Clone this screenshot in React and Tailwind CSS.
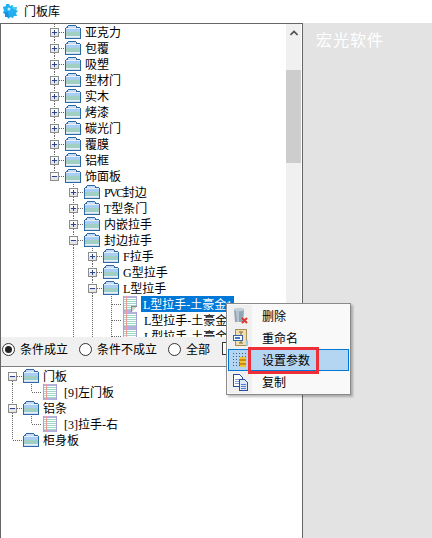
import React from "react";

const Cell = ({ up, down, right, box }) => (
  <svg width="19" height="16" className="shrink-0 block" shapeRendering="crispEdges">
    {up && <line x1="9.5" y1={0} x2="9.5" y2={box ? 4 : 8} stroke="#666" strokeDasharray="1 1" />}
    {down && <line x1="9.5" y1={box ? 13 : 8} x2="9.5" y2="16" stroke="#666" strokeDasharray="1 1" />}
    {right && <line x1={box ? 14 : 10} y1="8.5" x2="19" y2="8.5" stroke="#666" strokeDasharray="1 1" />}
    {box && (
      <g>
        <rect x="5.5" y="4.5" width="8" height="8" fill="#e6e6e6" stroke="#8c8c8c" />
        <rect x="6" y="5" width="7" height="3" fill="#fbfbfb" />
        <line x1="7" y1="8.5" x2="12" y2="8.5" stroke="#2a4490" />
        {box === "+" && <line x1="9.5" y1="6" x2="9.5" y2="11" stroke="#2a4490" />}
      </g>
    )}
  </svg>
);

const Folder = () => (
  <svg width="16" height="14" viewBox="0 0 16 14" className="shrink-0 block ml-px mr-[4px]" shapeRendering="crispEdges">
    <rect x="1" y="3" width="14" height="10" fill="#e4eef8" />
    <rect x="1" y="4" width="14" height="3" fill="#a9cdf3" />
    <rect x="1" y="7" width="14" height="4" fill="#a0cfc4" />
    <rect x="3" y="1" width="8" height="2" fill="#c9def5" />
    <path d="M2.5 2.5v-1l1-1h7l1 1v1h3l1 1v9H.5v-9l1-1z" fill="none" stroke="#2a68a6" />
    <rect x="0" y="12" width="16" height="2" fill="#2a68a6" />
    <rect x="1" y="12" width="14" height="1" fill="#cfe0f0" />
  </svg>
);

const Note = ({ ear }) => (
  <svg width="14" height="16" viewBox="0 0 14 16" className="shrink-0 block ml-[2px] mr-[4px]" shapeRendering="crispEdges">
    <rect x="0" y="0" width="14" height="16" fill="#fff" />
    <rect x="0" y="0" width="14" height="2" fill="#b4b0e0" />
    <rect x="0" y="14" width="14" height="2" fill="#b4b0e0" />
    <rect x="0" y="0" width="1" height="16" fill="#a7a3d8" />
    <rect x="13" y="0" width="1" height="16" fill="#a7a3d8" />
    {[3, 5, 7, 9, 11, 13].map((y) => (
      <rect key={y} x="1" width="12" y={y} height="1" fill="#9ad8c8" />
    ))}
    <rect x="3" y="0" width="1" height="16" fill="#f59a9a" />
    {ear && <path d="M8 16v-6h6v6z" fill="#fff" />}
    {ear && <path d="M9 15v-4h4z" fill="#cfcfcf" />}
    {ear && <path d="M8.5 15.5v-5h5" fill="none" stroke="#8a8a8a" />}
  </svg>
);

const Dir = ({ pre = [], up, down, box, children }) => (
  <div className="flex h-4 items-start whitespace-nowrap">
    {pre.map((g, i) => (
      <Cell key={i} up={g} down={g} />
    ))}
    <Cell up={up} down={down} right box={box} />
    <div className="h-4 flex items-center">
      <Folder />
    </div>
    <span className="leading-4 pt-px">{children}</span>
  </div>
);

const Leaf = ({ pre = [], down = true, selected, ear, children }) => (
  <div className="flex h-4 items-start whitespace-nowrap">
    {pre.map((g, i) => (
      <Cell key={i} up={g} down={g} />
    ))}
    <Cell up down={down} right />
    <Note ear={ear} />
    <span className={selected ? "h-4 leading-4 pt-px pl-[2px] pr-[2px] bg-[#0078d7] text-white" : "leading-4 pt-px pl-[3px]"}>{children}</span>
  </div>
);

const Radio = ({ on, children, className = "" }) => (
  <div className={"flex items-center gap-[5px] " + className}>
    <span className="w-[13px] h-[13px] rounded-full border border-[#333] bg-white flex items-center justify-center">
      {on && <span className="w-[7px] h-[7px] rounded-full bg-[#222]" />}
    </span>
    <span className="leading-4">{children}</span>
  </div>
);

const Logo = () => (
  <svg width="16" height="16" viewBox="0 0 16 16" className="block mt-[3px]">
    <path d="M1 4l3-1 0-2 3 0 1 2 3-1 0 2 4 0-1 3 2 1-2 2 1 3-3 0-1 2-3-1-1 2-2-2-2 0 0-3-2-1 1-3-1-2z" fill="#22aef0" />
    <path d="M9 3l2-1 0 2 4 0-1 3-3-1z" fill="#3fd0ee" />
    <path d="M2 9l4 0 1 5-2 0-2 0 0-3z" fill="#1a8fe0" />
    <circle cx="7" cy="6" r="1.5" fill="#bdeefa" />
  </svg>
);

const Trash = () => (
  <svg width="16" height="18" viewBox="0 0 16 18" className="block">
    <path d="M1 2h10l-.8 13H2z" fill="#8fa4b5" />
    <ellipse cx="6" cy="2.5" rx="5" ry="1.8" fill="#c3d0da" />
    <path d="M3 4l1 11h2V4z" fill="#b7c6d2" />
    <path d="M9 11l5 5M14 11l-5 5" stroke="#e0392b" strokeWidth="2" />
  </svg>
);
const Rename = () => (
  <svg width="16" height="18" viewBox="0 0 16 18" className="block">
    <rect x="2.5" y="0.5" width="11" height="16" fill="#f2dfb0" stroke="#a88f57" />
    <path d="M6 3h4M8 3v11M6 14h4" stroke="#7f6a3a" />
    <rect x="0.5" y="6.5" width="9" height="5" fill="#fff" stroke="#3a62a8" />
    <rect x="2" y="8" width="5" height="2" fill="#3a78c8" />
    <rect x="13" y="11" width="2" height="6" rx="1" fill="#9fc6e6" />
  </svg>
);
const Params = () => (
  <svg width="16" height="16" viewBox="0 0 16 16" className="block" shapeRendering="crispEdges">
    {[1, 4, 7, 10, 13].map((y) =>
      [0, 3, 6, 9, 12].map((x) => <rect key={x + "-" + y} x={x} y={y} width="1" height="1" fill="#4a5a80" />)
    )}
    <rect x="7" y="5" width="6" height="2" fill="#f4c430" />
    <rect x="6" y="7" width="7" height="2" fill="#c98a14" />
    <rect x="7" y="9" width="6" height="2" fill="#f4c430" />
    <rect x="6" y="11" width="7" height="2" fill="#c98a14" />
    <rect x="7" y="13" width="6" height="2" fill="#f4c430" />
  </svg>
);
const Copy = () => (
  <svg width="16" height="17" viewBox="0 0 16 17" className="block" shapeRendering="crispEdges">
    <path d="M.5.5h6l3 3v9H.5z" fill="#fff" stroke="#2a4f9a" />
    <path d="M2 5h5M2 7h5M2 9h5" stroke="#7fa0d8" />
    <path d="M6.5 5.5h5l3 3v8h-8z" fill="#dbe8fb" stroke="#2a4f9a" />
    <path d="M8 10h5M8 12h5M8 14h5" stroke="#4f7cc8" />
  </svg>
);

const MenuItem = ({ icon, active, children }) => (
  <div className={"flex h-[22px] items-center border " + (active ? "bg-[#b5d6f3] border-[#0078d7]" : "border-transparent")}>
    <div className="w-[23px] flex justify-center">{icon}</div>
    <span className="ml-[10px] leading-4">{children}</span>
  </div>
);

export default function App() {
  return (
    <div className="relative w-[432px] h-[538px] overflow-hidden flex flex-col bg-white text-black text-[12px] font-['Liberation_Serif','Noto_Sans_CJK_SC',sans-serif]">
      <div className="h-[23px] flex items-start pl-[2px] shrink-0">
        <Logo />
        <span className="ml-[6px] mt-[3px] leading-4 font-['Noto_Sans_CJK_SC',sans-serif]">门板库</span>
      </div>
      <div className="flex-1 flex min-h-0">
        <div className="w-[303px] shrink-0 border border-b-0 border-[#666] flex flex-col">
          <div className="h-[313px] flex shrink-0 pr-px">
            <div className="flex-1 overflow-hidden pl-[44px]">
              <Dir up down box="+">亚克力</Dir>
              <Dir up down box="+">包覆</Dir>
              <Dir up down box="+">吸塑</Dir>
              <Dir up down box="+">型材门</Dir>
              <Dir up down box="+">实木</Dir>
              <Dir up down box="+">烤漆</Dir>
              <Dir up down box="+">碳光门</Dir>
              <Dir up down box="+">覆膜</Dir>
              <Dir up down box="+">铝框</Dir>
              <Dir up box="-">饰面板</Dir>
              <Dir pre={[false]} up down box="+"><span className="tracking-[-1.5px]">PVC</span>封边</Dir>
              <Dir pre={[false]} up down box="+">T型条门</Dir>
              <Dir pre={[false]} up down box="+">内嵌拉手</Dir>
              <Dir pre={[false]} up down box="-">封边拉手</Dir>
              <Dir pre={[false, true]} up down box="+">F拉手</Dir>
              <Dir pre={[false, true]} up down box="+">G型拉手</Dir>
              <Dir pre={[false, true]} up down box="-">L型拉手</Dir>
              <Leaf pre={[false, true, true]} selected ear>L型拉手-土豪金1</Leaf>
              <Leaf pre={[false, true, true]}>L型拉手-土豪金2</Leaf>
              <Leaf pre={[false, true, true]}>L型拉手-土豪金3</Leaf>
            </div>
            <div className="w-[15px] bg-[#f0f0f0] flex flex-col shrink-0">
              <div className="h-[46px] flex justify-center pt-[6px]">
                <svg width="8" height="6" viewBox="0 0 8 6" className="block">
                  <path d="M.5 5L4 1.5 7.5 5" fill="none" stroke="#505050" strokeWidth="1.6" />
                </svg>
              </div>
              <div className="h-[93px] bg-[#cdcdcd]" />
            </div>
          </div>
          <div className="h-[30px] shrink-0 bg-[#f0f0f0] border-b border-[#808080] flex items-start pt-[4px] pl-px font-['Noto_Sans_CJK_SC',sans-serif]">
            <Radio on>条件成立</Radio>
            <Radio className="ml-[11px]">条件不成立</Radio>
            <Radio className="ml-[11px]">全部</Radio>
            <span className="ml-[12px] mt-px w-[13px] h-[13px] border border-[#333] bg-white" />
          </div>
          <div className="flex-1 pt-px pl-[2px]">
            <Dir down box="-">门板</Dir>
            <Leaf pre={[true]} down={false}>[9]左门板</Leaf>
            <Dir up down box="-">铝条</Dir>
            <Leaf pre={[true]} down={false}>[3]拉手-右</Leaf>
            <Dir up>柜身板</Dir>
          </div>
        </div>
        <div className="flex-1 bg-[#e3e3e3] pl-[13px] pt-[6px]">
          <span className="text-white text-[16px] leading-5 tracking-[1px] font-['Noto_Sans_CJK_SC',sans-serif]">宏光软件</span>
        </div>
      </div>

      {/* context menu */}
      <div className="absolute left-[226px] top-[303px] w-[125px] h-[92px] bg-[#f9f9f9] border border-[#8a8a8a] shadow-[2px_2px_2px_rgba(0,0,0,0.25)] px-px py-[1px] font-['Noto_Sans_CJK_SC',sans-serif]">
        <div className="absolute left-px top-px bottom-px w-[24px] bg-[#f0f0f0]" />
        <div className="relative flex flex-col">
          <MenuItem icon={<Trash />}>删除</MenuItem>
          <MenuItem icon={<Rename />}>重命名</MenuItem>
          <MenuItem icon={<Params />} active>设置参数</MenuItem>
          <MenuItem icon={<Copy />}>复制</MenuItem>
        </div>
      </div>
      {/* annotation */}
      <div className="absolute left-[248px] top-[347px] w-[71px] h-[27px] border-[3px] border-[#ee2f37]" />
    </div>
  );
}
